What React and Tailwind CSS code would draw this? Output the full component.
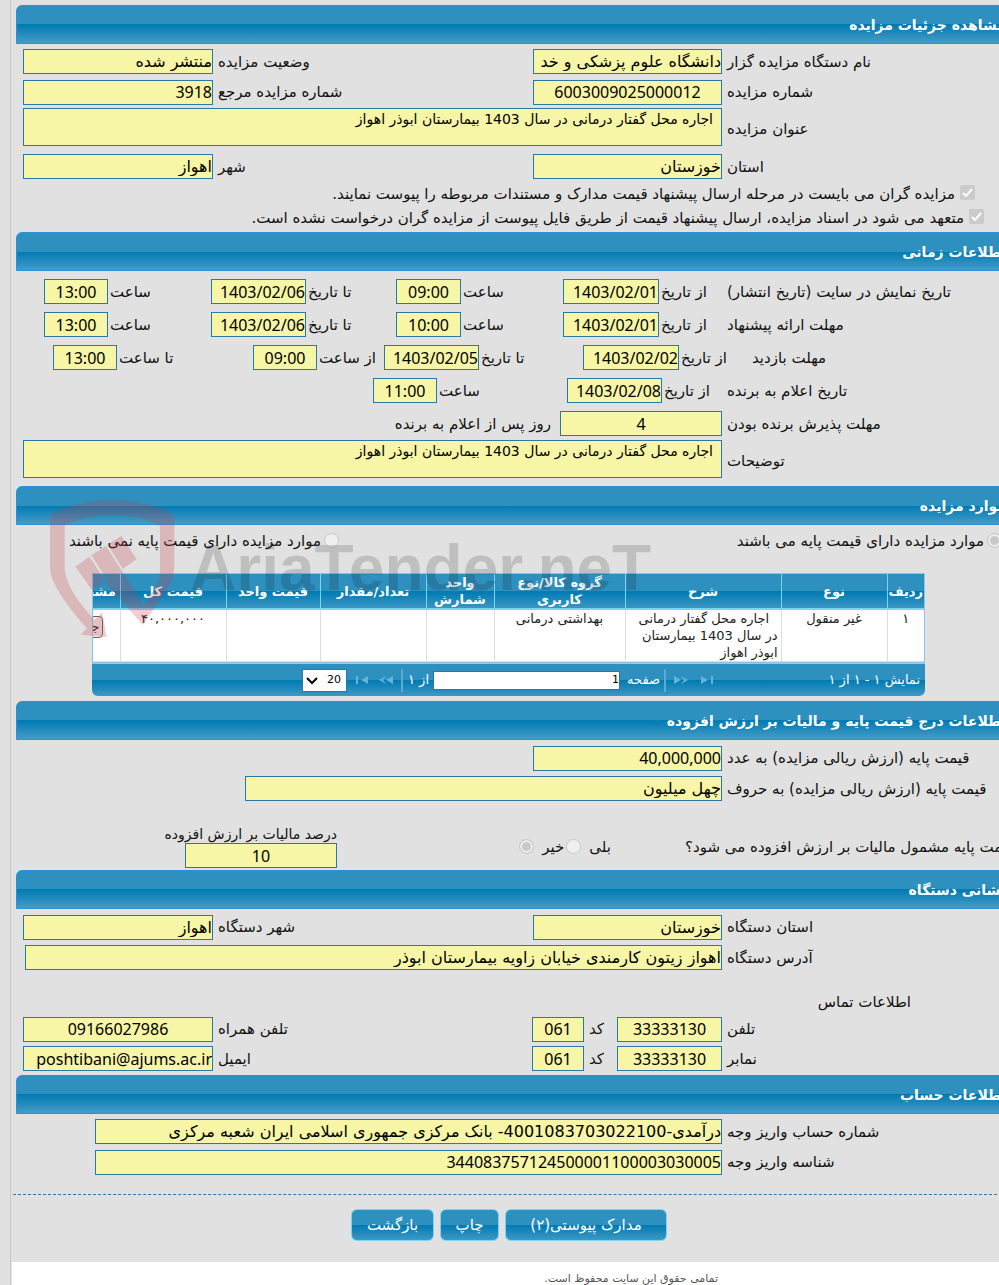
import React, { useId } from 'react'
import clsx from 'clsx'

function Section({ title, children, className }) {
  return (
    <section className={clsx('relative flex flex-col', className)}>
      <h2 className="-mr-2 ml-4 flex h-[39px] items-center rounded-tl-md border border-[#2a8fdc] bg-[linear-gradient(#2e90bf_50%,#007ab3_50%,#459cc6)] text-sm font-bold text-white">
        {title}
      </h2>
      {children}
    </section>
  )
}

function Row({ children, className }) {
  return <div className={clsx('flex items-center', className)}>{children}</div>
}

function Field({ label, value, labelClass = 'w-[277px] pl-[5px]', inputClass = 'w-[189px]', align = 'text-right', latin, grow }) {
  const id = useId()
  return (
    <div className={clsx('flex items-center', grow ? 'min-w-0 flex-1' : 'flex-none')}>
      <label htmlFor={id} className={clsx('flex-none text-left', labelClass)}>{label}</label>
      <input
        id={id}
        readOnly
        defaultValue={value}
        className={clsx(
          'h-[25px] border border-[#2a78a8] bg-[#f7f5a6] text-base text-black',
          latin && "font-['Noto_Sans','DejaVu_Sans',sans-serif]",
          align,
          inputClass,
        )}
      />
    </div>
  )
}

function TextBlock({ label, value }) {
  const id = useId()
  return (
    <div className="flex items-center pl-[23px]">
      <label htmlFor={id} className="w-[277px] flex-none pt-1 pl-[5px] text-left">{label}</label>
      <textarea
        id={id}
        readOnly
        defaultValue={value}
        className="h-[38px] min-w-0 flex-1 resize-none overflow-hidden border border-[#2a78a8] bg-[#f7f5a6] px-2 text-sm leading-5 text-black"
      />
    </div>
  )
}

function Check({ label, className }) {
  return (
    <label className={clsx('flex h-6 items-center gap-[5px]', className)}>
      <span className="relative mb-1 flex size-[15px] flex-none">
        <input type="checkbox" defaultChecked disabled className="size-[15px] appearance-none rounded-xs bg-[#cbcbcb]" />
        <svg viewBox="0 0 15 15" className="absolute inset-0 fill-none stroke-white stroke-2">
          <path d="M3 8l3 3 6-7" />
        </svg>
      </span>
      {label}
    </label>
  )
}

const radio =
  'size-[15px] flex-none appearance-none rounded-full border border-[#c9c9c9] bg-[#efefef] checked:bg-[#c8c8c8] checked:shadow-[inset_0_0_0_2px_#efefef]'

const timeRows = [
  {
    title: 'تاریخ نمایش در سایت (تاریخ انتشار)',
    titleClass: 'w-[272px]',
    cells: [
      { label: 'از تاریخ', value: '1403/02/01', labelClass: 'w-[68px] pl-0.5', inputClass: 'w-[96px]' },
      { label: 'ساعت', value: '09:00', labelClass: 'w-[102px] pl-0.5', inputClass: 'w-[65px]', align: 'text-center' },
      { label: 'تا تاریخ', value: '1403/02/06', labelClass: 'w-[90px] pl-0.5', inputClass: 'w-[95px]' },
      { label: 'ساعت', value: '13:00', labelClass: 'w-[103px] pl-0.5', inputClass: 'w-[64px]', align: 'text-center' },
    ],
  },
  {
    title: 'مهلت ارائه پیشنهاد',
    titleClass: 'w-[272px]',
    cells: [
      { label: 'از تاریخ', value: '1403/02/01', labelClass: 'w-[68px] pl-0.5', inputClass: 'w-[96px]' },
      { label: 'ساعت', value: '10:00', labelClass: 'w-[102px] pl-0.5', inputClass: 'w-[65px]', align: 'text-center' },
      { label: 'تا تاریخ', value: '1403/02/06', labelClass: 'w-[90px] pl-0.5', inputClass: 'w-[95px]' },
      { label: 'ساعت', value: '13:00', labelClass: 'w-[103px] pl-0.5', inputClass: 'w-[64px]', align: 'text-center' },
    ],
  },
  {
    title: 'مهلت بازدید',
    titleClass: 'w-[247px]',
    cells: [
      { label: 'از تاریخ', value: '1403/02/02', labelClass: 'w-[73px] pl-0.5', inputClass: 'w-[96px]' },
      { label: 'تا تاریخ', value: '1403/02/05', labelClass: 'w-[104px] pl-0.5', inputClass: 'w-[95px]' },
      { label: 'از ساعت', value: '09:00', labelClass: 'w-[67px] pl-0.5', inputClass: 'w-[64px]', align: 'text-center' },
      { label: 'تا ساعت', value: '13:00', labelClass: 'w-[136px] pl-0.5', inputClass: 'w-[64px]', align: 'text-center' },
    ],
  },
  {
    title: 'تاریخ اعلام به برنده',
    titleClass: 'w-[272px]',
    cells: [
      { label: 'از تاریخ', value: '1403/02/08', labelClass: 'w-[65px] pl-0.5', inputClass: 'w-[95px]' },
      { label: 'ساعت', value: '11:00', labelClass: 'w-[130px] pl-0.5', inputClass: 'w-[64px]', align: 'text-center' },
    ],
  },
]

const columns = [
  { title: 'ردیف', width: 'w-[37px]' },
  { title: 'نوع', width: 'w-[106px]' },
  { title: 'شرح', width: 'w-[156px]' },
  { title: 'گروه کالا/نوع کاربری', width: 'w-[131px]' },
  { title: 'واحد شمارش', width: 'w-[68px]' },
  { title: 'تعداد/مقدار', width: 'w-[106px]' },
  { title: 'قیمت واحد', width: 'w-[94px]' },
  { title: 'قیمت کل', width: 'w-[106px]' },
  { title: 'مشخصات', width: 'w-[70px]' },
]

function PagerIcon({ label, d, className }) {
  return (
    <button type="button" disabled aria-label={label} className={clsx('flex-none', className)}>
      <svg viewBox="0 0 14 10" className="h-[10px] w-[14px] fill-[#62b4da]">
        <path d={d} />
      </svg>
    </button>
  )
}

function Watermark() {
  return (
    <div aria-hidden="true" dir="ltr" className="pointer-events-none absolute top-1 left-10 flex">
      <svg viewBox="0 0 600 480" className="h-40 w-[200px] fill-[#c83c46] opacity-25">
        <path d="M30 75Q110 30 216 30T403 75V235Q400 262 390 285L308 405L196 276L244 240L310 345L348 290Q360 268 360 235V107Q300 75 216 75T74 107V235Q78 300 164 390L186 366L200 441L122 434L140 415Q30 290 30 235Z" />
        <path d="M106 230L148 200L196 272L156 300Z" />
        <path d="M154 196L198 168L244 240L202 270Z" />
        <path d="M203 164L244 137L290 208L248 236Z" />
      </svg>
      <span className="-ml-[50px] pt-7 font-['Liberation_Sans',sans-serif] text-[64px] leading-[100px] font-bold text-black/15">
        AriaTender.neT
      </span>
    </div>
  )
}

function ItemsTable() {
  return (
    <div className="mr-[74px] ml-[92px]">
      <div className="overflow-hidden border border-[#8cc4e8]">
        <table className="w-[874px] table-fixed border-collapse bg-white text-[13px] leading-[17px] whitespace-normal">
          <thead>
            <tr className="h-[35px] bg-[linear-gradient(#2e90bf_50%,#007ab3_50%,#3d98c4)] text-white">
              {columns.map(c => (
                <th key={c.title} className={clsx('border-b-2 border-l border-[#77d5f7] p-0 font-bold', c.width)}>{c.title}</th>
              ))}
            </tr>
          </thead>
          <tbody>
            <tr className="h-[52px] border-b border-[#ddd] text-center align-top text-[#222] [&>td]:border-l [&>td]:border-[#ddd]">
              <td>۱</td>
              <td>غیر منقول</td>
              <td className="pr-[3px] text-right">&nbsp; اجاره محل گفتار درمانی در سال 1403 بیمارستان ابوذر اهواز</td>
              <td>بهداشتی درمانی</td>
              <td />
              <td />
              <td />
              <td>۴۰,۰۰۰,۰۰۰</td>
              <td className="text-right">
                <button type="button" className="mt-1.5 mr-[17px] rounded-sm border border-[#666] bg-[#efefef] px-0.5 text-[13px] leading-5 whitespace-nowrap">جزئیات</button>
              </td>
            </tr>
          </tbody>
        </table>
      </div>
      <div className="flex h-[33px] items-center rounded-b-md border-t border-[#77d5f7] bg-[linear-gradient(#2e90bf_50%,#007ab3_50%,#3d98c4)] pr-[5px] text-[13px] text-white">
        <span className="w-[206px] flex-none">نمایش ۱ - ۱ از ۱</span>
        <PagerIcon label="صفحه آخر" d="M1 1l7 4l-7 4zM11 1h2v8h-2z" />
        <PagerIcon label="صفحه بعد" className="mr-3" d="M0 1l7 4l-7 4zM7 1l7 4l-7 4l3-4z" />
        <span className="mr-2 h-[23px] w-0.5 flex-none bg-[#5fa9cf]" />
        <label htmlFor="page" className="mr-1 w-10 flex-none">صفحه</label>
        <input id="page" defaultValue="1" className="h-[19px] min-w-0 flex-1 border border-[#2a78a8] bg-white text-right text-[11px] text-black" />
        <span className="mr-1 w-[22px] flex-none">از ۱</span>
        <span className="mr-1 h-[23px] w-0.5 flex-none bg-[#5fa9cf]" />
        <PagerIcon label="صفحه قبل" className="mr-2" d="M14 1l-7 4l7 4zM7 1l-7 4l7 4l-3-4z" />
        <PagerIcon label="صفحه اول" className="mr-2.5" d="M13 1l-7 4l7 4zM1 1h2v8h-2z" />
        <span className="relative mr-2 ml-[210px] flex-none">
          <select aria-label="تعداد در صفحه" dir="ltr" className="block h-[23px] w-[45px] appearance-none border border-[#2a78a8] bg-white pl-6 text-[11px] text-black">
            <option>20</option>
          </select>
          <svg viewBox="0 0 12 8" className="absolute top-2 left-1 h-2 w-3 fill-none stroke-black stroke-2">
            <path d="M1 1l5 5l5-5" />
          </svg>
        </span>
      </div>
    </div>
  )
}

function ActionButton({ children, className }) {
  return (
    <button
      type="button"
      className={clsx('h-8 rounded-md border border-[#77d5f7] bg-[linear-gradient(#2e90bf_50%,#007ab3_50%,#3d98c4)] text-[15px] text-white', className)}
    >
      {children}
    </button>
  )
}

export default function App() {
  return (
    <div dir="rtl" lang="fa" className="relative overflow-hidden bg-[#e1e1e1] font-['DejaVu_Sans',sans-serif] text-[15px] leading-5 whitespace-nowrap text-[#111]">
      <div className="absolute inset-y-0 left-[10px] w-px bg-[#c8c8c8]" />
      <div className="pt-[5px]">
        <Section title="مشاهده جزئیات مزایده">
          <Row className="h-[35px] justify-between pl-[23px]">
            <Field label="نام دستگاه مزایده گزار" value="دانشگاه علوم پزشکی و خد" />
            <Field label="وضعیت مزایده" value="منتشر شده" labelClass="pl-[5px]" inputClass="w-[190px]" />
          </Row>
          <Row className="h-[26px] justify-between pl-[23px]">
            <Field label="شماره مزایده" value="6003009025000012" latin align="text-center" />
            <Field label="شماره مزایده مرجع" value="3918" latin labelClass="pl-[5px]" inputClass="w-[190px]" />
          </Row>
          <div className="mt-[3px] mb-2">
            <TextBlock label="عنوان مزایده" value="اجاره محل گفتار درمانی در سال 1403 بیمارستان ابوذر اهواز" />
          </div>
          <Row className="mb-[3px] h-[25px] justify-between pl-[23px]">
            <Field label="استان" value="خوزستان" />
            <Field label="شهر" value="اهواز" labelClass="pl-[5px]" inputClass="w-[190px]" />
          </Row>
          <Check className="mr-6" label="مزایده گران می بایست در مرحله ارسال پیشنهاد قیمت مدارک و مستندات مربوطه را پیوست نمایند." />
          <Check className="mr-[15px]" label="متعهد می شود در اسناد مزایده، ارسال پیشنهاد قیمت از طریق فایل پیوست از مزایده گران درخواست نشده است." />
        </Section>

        <Section title="اطلاعات زمانی" className="mt-0.5">
          <div className="pt-1">
            {timeRows.map(row => (
              <Row key={row.title} className="h-[33px]">
                <span className={clsx('flex-none text-left', row.titleClass)}>{row.title}</span>
                {row.cells.map((cell, i) => <Field key={i} latin {...cell} />)}
              </Row>
            ))}
          </div>
          <Row className="h-[33px] gap-[9px]">
            <Field label="مهلت پذیرش برنده بودن" value="4" latin align="text-center" inputClass="w-[162px]" />
            <span>روز پس از اعلام به برنده</span>
          </Row>
          <TextBlock label="توضیحات" value="اجاره محل گفتار درمانی در سال 1403 بیمارستان ابوذر اهواز" />
        </Section>

        <Section title="موارد مزایده" className="mt-2">
          <Row className="h-[31px] justify-between pl-[69px]">
            <label className="-mr-[3px] flex items-center gap-[3px]">
              <input type="radio" name="basePrice" defaultChecked disabled className={radio} />
              موارد مزایده دارای قیمت پایه می باشند
            </label>
            <label className="flex items-center gap-[3px]">
              <input type="radio" name="basePrice" disabled className={radio} />
              موارد مزایده دارای قیمت پایه نمی باشند
            </label>
          </Row>
          <div className="mt-[17px]">
            <ItemsTable />
          </div>
          <Watermark />
        </Section>

        <Section title="اطلاعات درج قیمت پایه و مالیات بر ارزش افزوده" className="mt-[5px]">
          <Row className="h-9">
            <Field label="قیمت پایه (ارزش ریالی مزایده) به عدد" value="40,000,000" latin />
          </Row>
          <Row className="h-[25px] pl-[245px]">
            <Field label="قیمت پایه (ارزش ریالی مزایده) به حروف" value="چهل میلیون" grow inputClass="min-w-0 flex-1" />
          </Row>
          <Row className="mt-[22px] h-[47px]">
            <span className="-mr-4 w-[330px] flex-none text-left">قیمت پایه مشمول مالیات بر ارزش افزوده می شود؟</span>
            <div className="mr-[74px] flex items-center">
              <label htmlFor="vatYes" className="ml-2">بلی</label>
              <input id="vatYes" name="vat" type="radio" disabled className={radio} />
              <label htmlFor="vatNo" className="mr-0.5 ml-2">خیر</label>
              <input id="vatNo" name="vat" type="radio" defaultChecked disabled className={radio} />
            </div>
            <div className="mr-auto ml-[169px] flex w-[168px] flex-col">
              <label htmlFor="vatPercent" className="text-sm leading-[18px]">درصد مالیات بر ارزش افزوده</label>
              <input
                id="vatPercent"
                readOnly
                defaultValue="10"
                className="h-[25px] w-[152px] border border-[#2a78a8] bg-[#f7f5a6] text-center font-['Noto_Sans','DejaVu_Sans',sans-serif] text-base text-black"
              />
            </div>
          </Row>
        </Section>

        <Section title="نشانی دستگاه">
          <Row className="h-9 justify-between pl-[23px]">
            <Field label="استان دستگاه" value="خوزستان" />
            <Field label="شهر دستگاه" value="اهواز" labelClass="pl-[5px]" inputClass="w-[190px]" />
          </Row>
          <Row className="h-[25px] pl-[25px]">
            <Field label="آدرس دستگاه" value="اهواز زیتون کارمندی خیابان زاویه بیمارستان ابوذر" grow inputClass="min-w-0 flex-1" />
          </Row>
          <h3 className="mt-[22px] mr-[88px] mb-0.5 leading-5">اطلاعات تماس</h3>
          <Row className="h-[30px] justify-between pl-[23px]">
            <Row>
              <Field label="تلفن" value="33333130" latin align="text-center" inputClass="w-[105px]" />
              <Field label="کد" value="061" latin align="text-center" labelClass="w-[33px] pl-[5px]" inputClass="w-[52px]" />
            </Row>
            <Field label="تلفن همراه" value="09166027986" latin align="text-center" labelClass="pl-[5px]" inputClass="w-[190px]" />
          </Row>
          <Row className="h-[29px] justify-between pl-[23px]">
            <Row>
              <Field label="نمابر" value="33333130" latin align="text-center" inputClass="w-[105px]" />
              <Field label="کد" value="061" latin align="text-center" labelClass="w-[33px] pl-[5px]" inputClass="w-[52px]" />
            </Row>
            <Field label="ایمیل" value="poshtibani@ajums.ac.ir" latin labelClass="pl-[5px]" inputClass="w-[190px]" />
          </Row>
        </Section>

        <Section title="اطلاعات حساب" className="mt-0.5">
          <Row className="h-[35px] pl-[95px]">
            <Field label="شماره حساب واریز وجه" value="درآمدی-4001083703022100- بانک مرکزی جمهوری اسلامی ایران شعبه مرکزی" grow inputClass="min-w-0 flex-1" />
          </Row>
          <Row className="h-[26px] pl-[95px]">
            <Field label="شناسه واریز وجه" value="344083757124500001100003030005" latin grow inputClass="min-w-0 flex-1" />
          </Row>
        </Section>

        <div className="mt-[19px] mr-0.5 ml-[13px] border-t border-dashed border-[#2a78a8]" />
        <div className="mt-3.5 mb-[21px] mr-[332px] flex gap-1.5">
          <ActionButton className="w-[162px]">مدارک پیوستی(۲)</ActionButton>
          <ActionButton className="w-[59px]">چاپ</ActionButton>
          <ActionButton className="w-[83px]">بازگشت</ActionButton>
        </div>
      </div>
      <footer className="relative ml-3 h-[23px] overflow-hidden bg-white pt-2 pr-[281px] text-[11px] leading-[18px] text-[#555]">
        تمامی حقوق این سایت محفوظ است.
      </footer>
    </div>
  )
}
